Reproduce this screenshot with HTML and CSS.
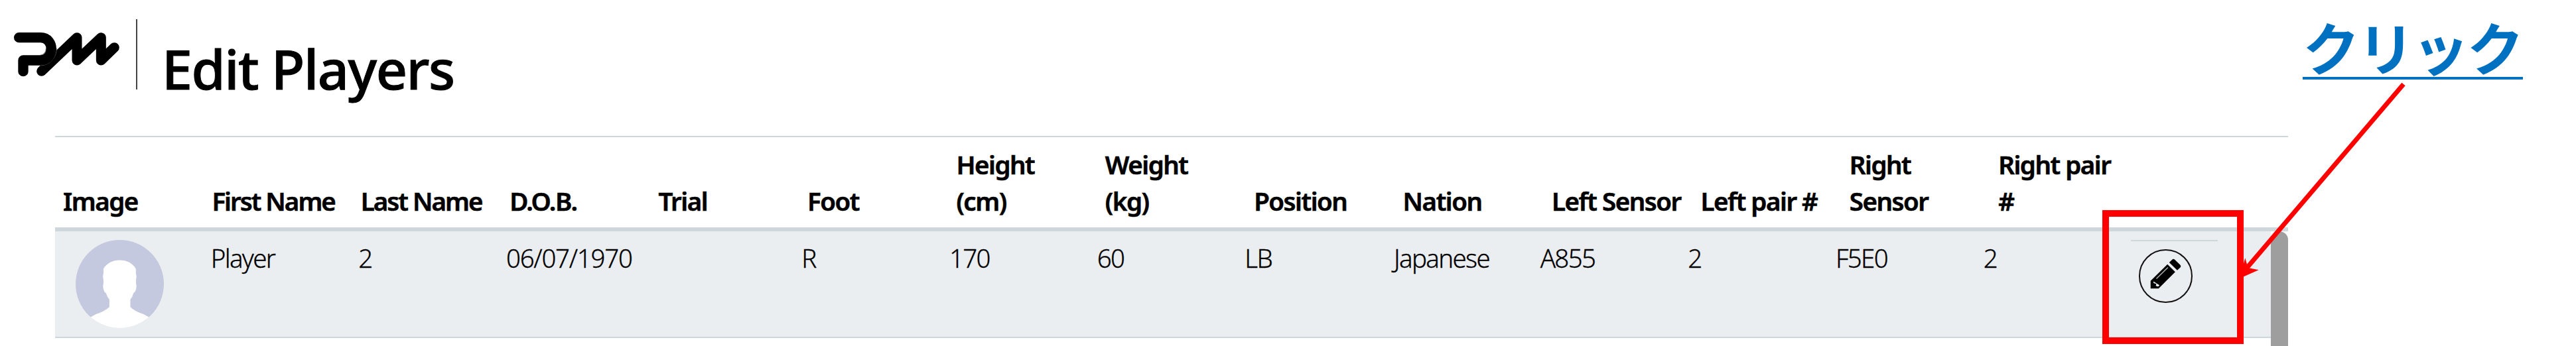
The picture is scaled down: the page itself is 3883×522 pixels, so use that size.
FILE: index.html
```html
<!DOCTYPE html>
<html lang="en">

<head>
    <meta charset="UTF-8">
    <meta name="viewport" content="width=device-width, initial-scale=1.0">
    <title>Edit Players</title>

    <link rel="stylesheet" href="styles.css">
</head>

<body>
    <header>
        <svg class="logo" viewBox="0 0 540 255" fill="none" stroke-linecap="round" stroke-linejoin="round">
            <path stroke="#000" stroke-width="45" d="M158 202L318 50V153L427 50V153L487 95" />
            <path stroke="#777" stroke-width="50" stroke-linecap="butt" d="M202 98C202 128 181 153 152 153" />
            <path stroke="#000" stroke-width="46" d="M56 50H154C218 50 218 153 154 153H75V203" />
        </svg>
        <div class="divider"></div>
        <h1>Edit Players</h1>
    </header>

    <main>
        <div class="table-head">
            <div>Image</div>
            <div class="name">First Name</div>
            <div class="name">Last Name</div>
            <div>D.O.B.</div>
            <div>Trial</div>
            <div>Foot</div>
            <div>Height<br>(cm)</div>
            <div>Weight<br>(kg)</div>
            <div>Position</div>
            <div>Nation</div>
            <div>Left Sensor</div>
            <div>Left pair #</div>
            <div>Right<br>Sensor</div>
            <div>Right pair<br>#</div>
            <div></div>
        </div>

        <div class="table-body">
            <div class="row">
                <div class="image-cell">
                    <svg class="avatar" viewBox="27 33 400 400">
                        <clipPath id="round">
                            <circle cx="227" cy="233" r="200" />
                        </clipPath>
                        <g clip-path="url(#round)">
                            <rect x="27" y="33" width="400" height="400" fill="#c4c9df" />
                            <path fill="#fff" d="M153 164C168 139 195 125 227 125S286 139 300 164V186Q305 198 301 212V232Q305 244 299 262Q294 272 289 275Q285 292 275 303V337Q292 356 335 370L362 385V440H92V385L119 370Q162 356 180 337V303Q170 292 165 275Q159 272 155 262Q149 244 153 232V212Q149 198 153 186Z" />
                        </g>
                    </svg>
                </div>
                <div>Player</div>
                <div>2</div>
                <div class="date">06/07/1970</div>
                <div></div>
                <div>R</div>
                <div>170</div>
                <div>60</div>
                <div>LB</div>
                <div class="nation">Japanese</div>
                <div>A855</div>
                <div>2</div>
                <div>F5E0</div>
                <div>2</div>
                <div>
                    <div class="actions">
                        <button class="edit" aria-label="Edit">
                            <svg viewBox="29 18 242 242">
                                <circle cx="150" cy="139" r="118" fill="none" stroke="#111" stroke-width="6" />
                                <path d="M82 195V161L158 86L193 120L118 195Z" />
                                <path d="M166 78L179 65Q185 59 191 65L215 88Q221 95 215 101L202 113Z" />
                                <path fill="#ebeef1" d="M95 163L122 180Q120 186 113 186L96 178Z" />
                                <path d="M94 170L108 174L104 186H92Z" />
                                <path fill="none" stroke="#b5b8ba" stroke-width="4" d="M108 151L160 100" />
                            </svg>
                        </button>
                    </div>
                </div>
            </div>
            <div class="scrollbar"></div>
        </div>
    </main>

    <div class="highlight"></div>
    <div class="callout">クリック</div>
    <svg class="arrow" width="270" height="310" viewBox="3365 120 270 310">
        <path fill="none" stroke="#f00" stroke-width="7" d="M3623 127L3387 404" />
        <path fill="#f00" d="M3376 420L3384.3 389.3L3388.5 404L3404.7 407.3Z" />
    </svg>
</body>

</html>
```
FILE: styles.css
```css
html,
body {
    padding: 0;
    margin: 0;
}

* {
    box-sizing: border-box;
}

body {
    position: relative;
    width: 3883px;
    height: 522px;
    overflow: hidden;
    background-color: white;
    color: black;
    font-family: "Noto Sans", "Noto Sans CJK JP", sans-serif;
}

header {
    display: flex;
    align-items: flex-start;
    height: 205px;
    padding: 29px 0 0 10px;
}

.logo {
    width: 180px;
    height: 85px;
    margin-top: 11px;
}

.divider {
    width: 2px;
    height: 106px;
    margin-left: 15px;
    background-color: #444;
}

h1 {
    margin: 0 0 0 37px;
    padding-top: 18px;
    font-size: 82.6px;
    font-weight: 500;
    line-height: 112px;
    letter-spacing: -1.5px;
    white-space: nowrap;
    -webkit-text-stroke: 1px black;
}

main {
    width: 3366px;
    margin-left: 83px;
    font-size: 38.5px;
    line-height: 55px;
    white-space: nowrap;
}

.table-head {
    display: grid;
    grid-template-columns: repeat(15, 1fr);
    align-items: end;
    height: 144px;
    padding-bottom: 12px;
    border-top: 2px solid #ced7dc;
    border-bottom: 6px solid #ced7dc;
    font-weight: 600;
    letter-spacing: -1.5px;
    -webkit-text-stroke: .6px black;
}

.table-head > div {
    padding-left: 12px;
}

.table-head > .name {
    letter-spacing: -2px;
}

.table-body {
    display: flex;
    height: 173px;
}

.row {
    flex: 1;
    display: grid;
    grid-template-columns: repeat(15, 1fr);
    height: 161px;
    background-color: #ebeef1;
    border-bottom: 2px solid #ced7dc;
    font-weight: 350;
    letter-spacing: -1.7px;
    -webkit-text-stroke: .3px black;
}

.row > div {
    padding: 13px 0 0 12px;
}

.row > .date {
    letter-spacing: -1.3px;
}

.row > .nation {
    padding-left: 14px;
}

.row > .image-cell {
    padding-left: 31px;
}

.avatar {
    display: block;
    width: 133px;
    height: 133px;
}

.scrollbar {
    width: 26px;
    border-radius: 13px 13px 0 0;
    background-color: #9e9e9e;
}

.actions {
    width: 131px;
    padding: 12px 0 0 12px;
    border-top: 2px solid #ced7dc;
}

.edit {
    display: block;
    width: 81px;
    height: 81px;
    padding: 0;
    border: none;
    border-radius: 50%;
    background: none;
    cursor: pointer;
}

.edit svg {
    display: block;
}

.highlight {
    position: absolute;
    left: 3169px;
    top: 317px;
    width: 213px;
    height: 202px;
    border: 10px solid #f00;
}

.callout {
    position: absolute;
    left: 3471px;
    top: 34px;
    width: 332px;
    height: 86px;
    border-bottom: 4px solid #0070c0;
    color: #0070c0;
    font-family: "Noto Sans CJK JP", sans-serif;
    font-size: 86px;
    font-weight: bold;
    line-height: 72px;
    letter-spacing: -3.5px;
    white-space: nowrap;
}

.arrow {
    position: absolute;
    left: 3365px;
    top: 120px;
}
```
